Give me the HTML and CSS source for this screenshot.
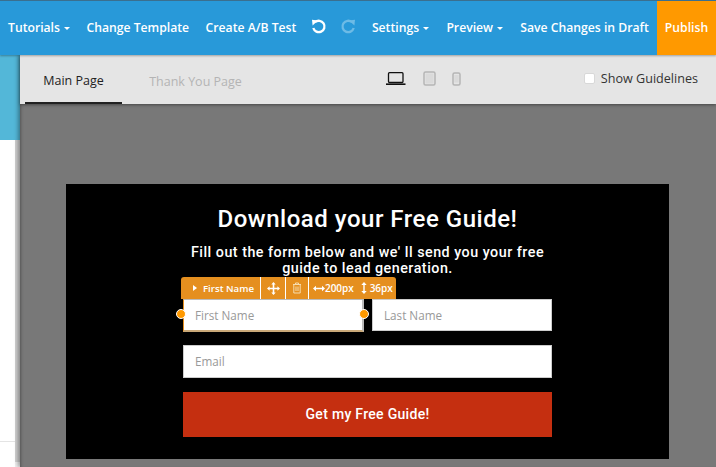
FILE: index.html
```html
<!DOCTYPE html>
<html lang="en">
<head>
<meta charset="utf-8">
<title>Editor</title>
<link rel="stylesheet" href="styles.css">
</head>
<body>
<div class="app">
  <header class="topbar">
    <nav class="nav">
      <a class="nav-item">Tutorials <i class="caret"></i></a>
      <a class="nav-item">Change Template</a>
      <a class="nav-item">Create A/B Test</a>
      <span class="history">
        <svg class="hist" width="16" height="16" viewBox="0 0 16 16"><path d="M4 3.200 A5.700 5.700 0 1 1 2.300 9" fill="none" stroke="#fff" stroke-width="2.300"/><path d="M1 .8 L7 1.500 L1.600 6.500 Z" fill="#fff"/></svg>
        <svg class="hist" width="16" height="16" viewBox="0 0 16 16"><path d="M12 3.200 A5.700 5.700 0 1 0 13.700 9" fill="none" stroke="#6dbbe6" stroke-width="2.300"/><path d="M15 .8 L9 1.500 L14.400 6.500 Z" fill="#6dbbe6"/></svg>
      </span>
      <a class="nav-item">Settings <i class="caret"></i></a>
      <a class="nav-item">Preview <i class="caret"></i></a>
      <a class="nav-item">Save Changes in Draft</a>
    </nav>
    <a class="publish">Publish</a>
  </header>
  <div class="body">
    <aside class="sidebar">
      <div class="side-top"></div>
      <div class="side-panel">
        <div class="side-white"><div class="side-line"></div></div>
        <div class="side-scroll"><div class="side-end"></div></div>
      </div>
    </aside>
    <main class="main">
      <div class="toolbar">
        <div class="tabs">
          <a class="tab active">Main Page</a>
          <a class="tab">Thank You Page</a>
        </div>
        <div class="devices">
          <svg width="20" height="13" viewBox="0 0 20 13"><rect x="2.500" y=".7" width="14.500" height="9.800" rx="1" fill="none" stroke="#111" stroke-width="1.300"/><rect x="0" y="11.400" width="19.500" height="1.600" fill="#111"/></svg>
          <svg width="13" height="15" viewBox="0 0 13 15"><rect x="1" y="1" width="11" height="13" rx="1.500" fill="none" stroke="#b5b5b5" stroke-width="1.500"/><rect x="2.500" y="2.500" width="8" height="10" fill="#dadada"/></svg>
          <svg width="9" height="14" viewBox="0 0 9 14"><rect x="1" y="1" width="7" height="12" rx="1.500" fill="none" stroke="#b5b5b5" stroke-width="1.500"/><rect x="2.300" y="3" width="4.400" height="7.500" fill="#dadada"/></svg>
        </div>
        <label class="guides"><span class="check"></span>Show Guidelines</label>
      </div>
      <div class="canvas">
        <section class="card">
          <h1 class="title">Download your Free Guide!</h1>
          <p class="sub">Fill out the form below and we' ll send you your free<br>guide to lead generation.</p>
          <form class="form">
            <div class="row">
              <div class="field selected">First Name
                <span class="handle left"></span>
                <span class="handle right"></span>
              </div>
              <div class="field">Last Name</div>
            </div>
            <div class="field wide">Email</div>
            <div class="submit">Get my Free Guide!</div>
            <div class="edit-bar">
              <span class="seg seg-name"><i class="tri"></i>First Name</span>
              <span class="seg seg-move">
                <svg width="13" height="13" viewBox="0 0 13 13"><path d="M6.500 0 L8.700 2.600 H7.300 V5.700 H10.400 V4.300 L13 6.500 L10.400 8.700 V7.300 H7.300 V10.400 H8.700 L6.500 13 L4.300 10.400 H5.700 V7.300 H2.600 V8.700 L0 6.500 L2.600 4.300 V5.700 H5.700 V2.600 H4.300 Z" fill="#fff"/></svg>
              </span>
              <span class="seg seg-trash">
                <svg width="10" height="12" viewBox="0 0 10 12"><path d="M1 2.500 H9 M3.500 2.500 V1 H6.500 V2.500 M1.800 2.500 V11 H8.200 V2.500 M4 4.500 V9 M6 4.500 V9" fill="none" stroke="#f6dcae" stroke-width="1"/></svg>
              </span>
              <span class="seg seg-size">
                <svg width="12" height="7" viewBox="0 0 12 7"><path d="M0 3.500 L3 .8 V2.800 H9 V.8 L12 3.500 L9 6.200 V4.200 H3 V6.200 Z" fill="#fff"/></svg><b>200px</b>
                <svg class="v" width="6" height="12" viewBox="0 0 6 12"><path d="M3 0 L5.700 3 H3.700 V9 H5.700 L3 12 L.3 9 H2.300 V3 H.3 Z" fill="#fff"/></svg><b>36px</b>
              </span>
            </div>
          </form>
        </section>
      </div>
    </main>
  </div>
</div>
</body>
</html>
```
FILE: styles.css
```css
* { box-sizing: border-box; }
html, body { margin: 0; height: 100%; overflow: hidden; }
body { font-family: "Open Sans", sans-serif; background: #787878; }
.app { width: 716px; height: 467px; display: flex; flex-direction: column; overflow: hidden; }

.topbar { height: 55px; flex: none; background: #2899d9; border-top: 1px solid #3a6f8f; display: flex; justify-content: space-between; position: relative; z-index: 3; box-shadow: 0 1px 2px rgba(0,0,0,.3); }
.nav { display: flex; align-items: center; padding: 0 0 2px 8px; color: #fff; font-size: 12.200px; font-weight: 600; }
.nav-item { white-space: nowrap; margin-right: 16.500px; display: flex; align-items: center; gap: 3px; }
.history ~ .nav-item { margin-right: 17.300px; }
.nav .nav-item:last-child { margin-right: 0; }
.caret { display: inline-block; width: 0; height: 0; border-left: 3px solid transparent; border-right: 3px solid transparent; border-top: 3px solid #fff; margin: 2px 0 0 1px; }
.history { display: flex; gap: 13px; margin: 0 16px 0 -2px; }
.hist { display: block; }
.publish { width: 59px; flex: none; background: #ff9900; color: #fff; font-size: 12.200px; font-weight: 600; display: flex; align-items: center; justify-content: center; padding: 0 0 2px; }

.body { flex: 1; display: flex; min-height: 0; }
.sidebar { width: 20px; flex: none; display: flex; flex-direction: column; }
.side-top { height: 85px; background: #53b7d8; }
.side-panel { flex: 1; display: flex; }
.side-white { width: 15px; background: #fff; padding-top: 301px; }
.side-line { height: 1px; background: #e4e4e4; }
.side-scroll { width: 5px; background: #cfcfcf; display: flex; flex-direction: column; justify-content: flex-end; }
.side-end { height: 5px; background: #eeeeee; }

.main { flex: 1; display: flex; flex-direction: column; position: relative; box-shadow: -2px 0 4px rgba(0,0,0,.35); }
.toolbar { height: 49px; flex: none; background: #e5e5e5; display: flex; align-items: center; position: relative; z-index: 2; box-shadow: 0 1px 3px rgba(0,0,0,.4); }
.tabs { display: flex; height: 49px; padding-left: 5px; }
.tab { width: 97px; display: flex; align-items: center; justify-content: center; font-size: 12.500px; color: #b4b4b4; padding-top: 3px; margin-right: 25px; }
.tab.active { color: #222; border-bottom: 2px solid #222; }
.devices { display: flex; align-items: center; gap: 17px; margin-left: 117px; padding-bottom: 2px; }
.devices svg { display: block; }
.devices svg:last-child { margin-left: -1px; }
.guides { margin-left: auto; margin-right: 18px; display: flex; align-items: center; gap: 6px; font-size: 12.600px; color: #333; padding-bottom: 2px; }
.check { width: 11px; height: 11px; background: #fff; border: 1px solid #d8d8d8; border-radius: 2px; }

.canvas { flex: 1; background: #787878; padding: 80px 47px 8px 46px; box-shadow: inset 3px 0 3px -2px rgba(0,0,0,.3); }
.card { width: 603px; height: 275px; background: #000; display: flex; flex-direction: column; align-items: center; padding-top: 21px; }
.title { margin: 0; font-family: Roboto, sans-serif; font-size: 24px; line-height: 29px; font-weight: 500; color: #fff; letter-spacing: .52px; }
.sub { margin: 10px 0 0; font-family: Roboto, sans-serif; font-size: 14.300px; line-height: 16px; font-weight: 500; color: #fff; text-align: center; letter-spacing: .5px; }
.form { width: 369px; margin-top: 23px; position: relative; display: flex; flex-direction: column; }
.row { display: flex; justify-content: space-between; }
.field { height: 32px; width: 180px; background: #fff; border: 1px solid #ccc; display: flex; align-items: center; padding-left: 11px; font-size: 11.700px; color: #999; position: relative; }
.field.selected { border: 2px solid #bbb; border-top-width: 1px; border-left: 1px solid #e58f1f; border-bottom-color: #c9a878; width: 181px; height: 33px; }
.field.wide { width: 369px; margin-top: 13px; height: 33px; padding-bottom: 2px; }
.submit { height: 45px; margin-top: 14px; padding-bottom: 2px; background: #c52f10; color: #fff; font-family: Roboto, sans-serif; font-size: 14px; font-weight: 500; letter-spacing: .3px; display: flex; align-items: center; justify-content: center; }
.handle { position: absolute; top: 9px; width: 10px; height: 10px; border-radius: 50%; background: #ff9900; border: 1px solid #fff; }
.handle.left { left: -8px; }
.handle.right { right: -7px; }

.edit-bar { position: absolute; left: -2px; top: -22px; height: 22px; background: #e58f1f; border-radius: 3px 3px 0 0; display: flex; align-items: stretch; color: #fff; font-size: 9.700px; font-weight: 600; }
.seg { display: flex; align-items: center; justify-content: center; border-right: 1px solid #fff; }
.seg-name { width: 80px; gap: 6px; padding-left: 6px; }
.seg-move { width: 25px; }
.seg-trash { width: 23px; }
.seg-size { width: 87px; border-right: 0; justify-content: flex-start; padding-left: 4px; font-size: 10px; }
.seg-size b { font-weight: 600; letter-spacing: -.05px; }
.seg-size .v { margin: 0 3px 0 7px; }
.tri { width: 0; height: 0; border-top: 3px solid transparent; border-bottom: 3px solid transparent; border-left: 4px solid #fff; }
```
